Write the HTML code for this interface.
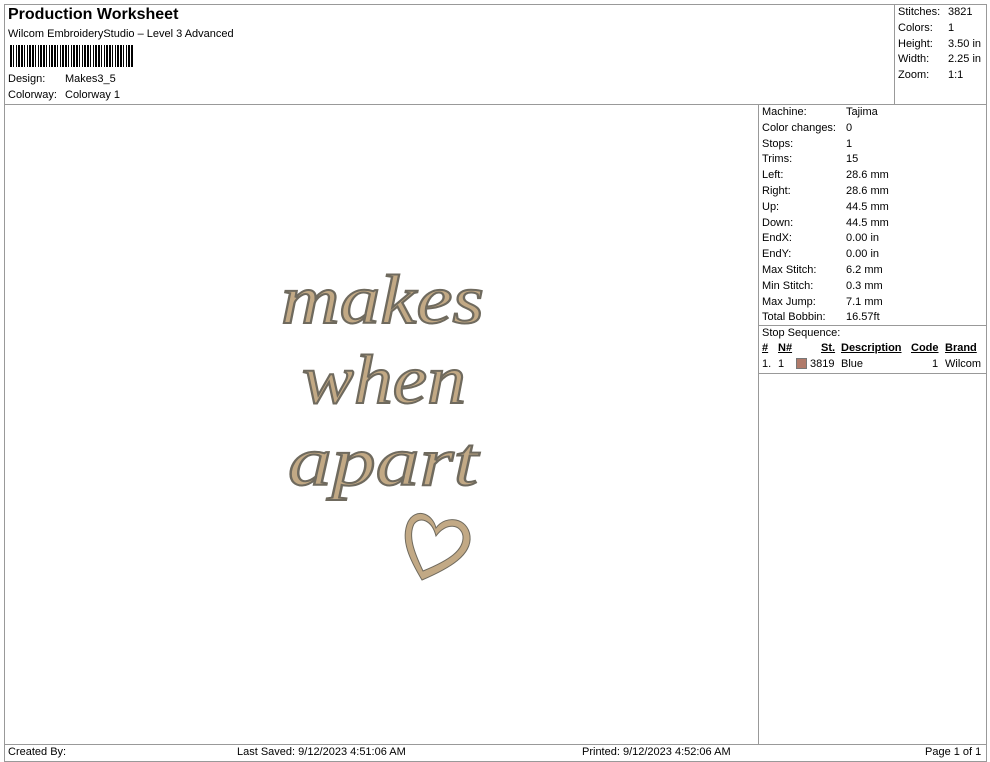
<!DOCTYPE html>
<html><head><style>
body{margin:0;width:990px;height:762px;background:#fff;font-family:"Liberation Sans",sans-serif;color:#000;position:relative;overflow:hidden}
.a{position:absolute;white-space:nowrap;font-size:11px}
.l{position:absolute;background:#999}
</style></head><body>
<div style="position:absolute;left:4px;top:4px;width:981px;height:756px;border:1px solid #999"></div>
<div class="l" style="left:4px;top:104px;width:982px;height:1px"></div>
<div class="l" style="left:894px;top:4px;width:1px;height:100px"></div>
<div class="l" style="left:758px;top:104px;width:1px;height:640px"></div>
<div class="l" style="left:4px;top:744px;width:982px;height:1px"></div>
<div class="l" style="left:758px;top:325px;width:228px;height:1px"></div>
<div class="l" style="left:758px;top:373px;width:228px;height:1px"></div>
<div class="a" style="left:8px;top:6px;font-size:16px;font-weight:bold">Production Worksheet</div>
<div class="a" style="left:8px;top:28px">Wilcom EmbroideryStudio – Level 3 Advanced</div>
<div style="position:absolute;left:10px;top:45px;width:123px;height:22px;background:repeating-linear-gradient(90deg,#000 0 2px,#fff 2px 3px,#000 3px 4px,#fff 4px 6px,#000 6px 7px,#fff 7px 8px,#000 8px 10px,#fff 10px 11px)"></div>
<div class="a" style="left:8px;top:73px">Design:</div><div class="a" style="left:65px;top:73px">Makes3_5</div>
<div class="a" style="left:8px;top:89px">Colorway:</div><div class="a" style="left:65px;top:89px">Colorway 1</div>
<div class="a" style="left:898px;top:5px;line-height:15.8px">Stitches:<br>Colors:<br>Height:<br>Width:<br>Zoom:</div>
<div class="a" style="left:948px;top:5px;line-height:15.8px">3821<br>1<br>3.50 in<br>2.25 in<br>1:1</div>
<div class="a" style="left:762px;top:105px;line-height:15.8px">Machine:<br>Color changes:<br>Stops:<br>Trims:<br>Left:<br>Right:<br>Up:<br>Down:<br>EndX:<br>EndY:<br>Max Stitch:<br>Min Stitch:<br>Max Jump:<br>Total Bobbin:<br>Stop Sequence:</div>
<div class="a" style="left:846px;top:105px;line-height:15.8px">Tajima<br>0<br>1<br>15<br>28.6 mm<br>28.6 mm<br>44.5 mm<br>44.5 mm<br>0.00 in<br>0.00 in<br>6.2 mm<br>0.3 mm<br>7.1 mm<br>16.57ft</div>
<div class="a" style="left:762px;top:342px;font-weight:bold;text-decoration:underline">#</div>
<div class="a" style="left:778px;top:342px;font-weight:bold;text-decoration:underline">N#</div>
<div class="a" style="left:821px;top:342px;font-weight:bold;text-decoration:underline">St.</div>
<div class="a" style="left:841px;top:342px;font-weight:bold;text-decoration:underline">Description</div>
<div class="a" style="left:911px;top:342px;font-weight:bold;text-decoration:underline">Code</div>
<div class="a" style="left:945px;top:342px;font-weight:bold;text-decoration:underline">Brand</div>
<div class="a" style="left:762px;top:358px">1.</div><div class="a" style="left:778px;top:358px">1</div>
<div style="position:absolute;left:796px;top:358px;width:9px;height:9px;background:#b07a6a;border:1px solid #777"></div>
<div class="a" style="left:810px;top:358px">3819</div><div class="a" style="left:841px;top:358px">Blue</div>
<div class="a" style="left:932px;top:358px">1</div><div class="a" style="left:945px;top:358px">Wilcom</div>
<div class="a" style="left:8px;top:746px">Created By:</div>
<div class="a" style="left:237px;top:746px">Last Saved: 9/12/2023 4:51:06 AM</div>
<div class="a" style="left:582px;top:746px">Printed: 9/12/2023 4:52:06 AM</div>
<div class="a" style="left:925px;top:746px">Page 1 of 1</div>
<svg style="position:absolute;left:0;top:0" width="990" height="762">
<g font-family="Liberation Serif,serif" font-style="italic" font-size="70" fill="#c2a985" stroke="#6f6a5e" stroke-width="2">
<text x="281" y="323" textLength="203" lengthAdjust="spacingAndGlyphs">makes</text>
<text x="302" y="403" textLength="164" lengthAdjust="spacingAndGlyphs">when</text>
<text x="288" y="485" textLength="190" lengthAdjust="spacingAndGlyphs">apart</text>
</g>
<path d="M422 580 C410 560 400 540 408 522 C415 508 432 512 436 528 C446 514 468 518 470 536 C472 555 450 568 422 580 Z M423 571 C450 560 464 550 463 536 C461 524 446 522 436 536 C432 520 420 516 414 524 C408 536 414 552 423 571 Z" fill="#c2a985" fill-rule="evenodd" stroke="#6f6a5e" stroke-width="1"/>
</svg>
</body></html>
